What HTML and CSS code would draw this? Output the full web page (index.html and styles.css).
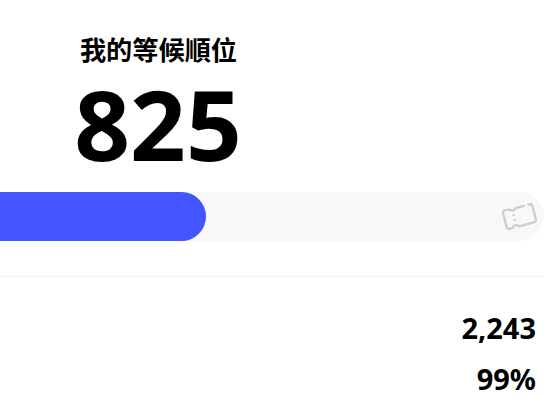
FILE: index.html
```html
<!DOCTYPE html>
<html lang="zh-Hant">
<head>
    <meta charset="UTF-8">
    <title>等候順位</title>
    <link rel="stylesheet" href="styles.css">
</head>
<body>
    <div class="queue">
        <div class="rank">
            <p class="rank-title">我的等候順位</p>
            <p class="rank-number">825</p>
        </div>

        <div class="progress">
            <div class="progress-bar"></div>
            <svg class="ticket" viewBox="0 0.7 38 32" fill="none" stroke="#cdcdcd" stroke-width="2.3" stroke-linecap="round" stroke-linejoin="round">
                <path d="M24 5.6 L15.5 7.8 Q14.5 10.2 12.5 10.3 Q10.8 10.3 9.2 9.2 L4.5 10.3 Q2.6 11 3 13 L6.7 26.8 Q7.3 28.8 9.2 28.5 L13 27.5 Q13.6 25 15.7 24.9 Q17.5 24.8 19 26 L34 22 Q36.3 21.3 35.8 19 L32.5 6 Q31.8 3.5 29.8 4 L28.4 4.3"/>
                <path d="M13.6 14.8 V14.9 M14.8 19.8 V19.9"/>
            </svg>
        </div>

        <div class="info">
            <p>2,243</p>
            <p>99%</p>
        </div>
    </div>
</body>
</html>
```

FILE: styles.css
```css
body { margin: 0; background: #fff; color: #000; overflow: hidden; font-family: "Noto Sans", "Noto Sans CJK TC", sans-serif; }
p { margin: 0; }
.queue { width: 544px; height: 402px; }
.rank { width: 316px; padding-top: 29px; text-align: center; font-weight: 700; }
.rank-title { padding-left: 1px; font-family: "Noto Sans CJK TC", sans-serif; font-size: 26.2px; line-height: 40px; }
.rank-number { font-size: 97.5px; line-height: 110px; }
.progress { display: flex; align-items: center; justify-content: space-between; height: 49px; margin-top: 13px; padding-right: 6px; background: #f8f8f8; border-radius: 0 25px 25px 0; }
.progress-bar { width: 206px; height: 49px; background: #4355ff; border-radius: 0 25px 25px 0; }
.ticket { width: 38px; height: 32px; }
.info { margin-top: 35px; padding: 25px 8px 0 0; border-top: 1px solid #f3f3f3; text-align: right; font-size: 29px; font-weight: 700; line-height: 51px; }
```
